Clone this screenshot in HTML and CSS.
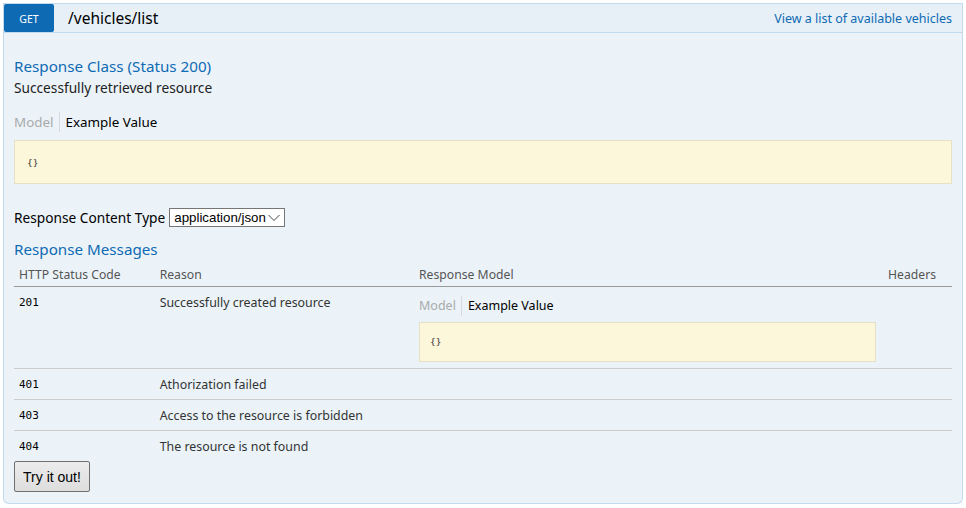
FILE: index.html
```html
<!DOCTYPE html>
<html>
<head>
<meta charset="utf-8">
<link rel="stylesheet" href="styles.css">
</head>
<body>
<div class="operation">
  <div class="heading">
    <span class="method">GET</span>
    <span class="path">/vehicles/list</span>
    <a class="summary">View a list of available vehicles</a>
  </div>
  <div class="content">
    <h4 class="h-class">Response Class (Status 200)</h4>
    <div class="desc">Successfully retrieved resource</div>
    <div class="tabs">
      <span class="tab tab-model">Model</span>
      <span class="tab tab-example">Example Value</span>
    </div>
    <div class="snippet"><code>{}</code></div>
    <div class="ctype">
      <label>Response Content Type</label>
      <span class="select">application/json
        <svg width="12" height="8" viewBox="0 0 12 8"><path d="M0.5 1 L6 6.5 L11.5 1" fill="none" stroke="#444" stroke-width="1"/></svg>
      </span>
    </div>
    <h4 class="h-msg">Response Messages</h4>
    <table class="messages">
      <thead>
        <tr><th class="c-code">HTTP Status Code</th><th class="c-reason">Reason</th><th class="c-model">Response Model</th><th class="c-head">Headers</th></tr>
      </thead>
      <tbody>
        <tr class="r-big">
          <td class="code">201</td><td>Successfully created resource</td>
          <td>
            <div class="tabs small">
              <span class="tab tab-model">Model</span>
              <span class="tab tab-example">Example Value</span>
            </div>
            <div class="snippet inner"><code>{}</code></div>
          </td>
          <td></td>
        </tr>
        <tr><td class="code">401</td><td>Athorization failed</td><td></td><td></td></tr>
        <tr><td class="code">403</td><td>Access to the resource is forbidden</td><td></td><td></td></tr>
        <tr class="last"><td class="code">404</td><td>The resource is not found</td><td></td><td></td></tr>
      </tbody>
    </table>
    <button class="try">Try it out!</button>
  </div>
</div>
</body>
</html>
```
FILE: styles.css
```css
html, body { margin: 0; padding: 0; background: #fff; }
body { padding: 3px 3px 0 3px; font-family: "Noto Sans", "Open Sans", sans-serif; font-size: 13.7px; color: #333; }
.operation { width: 960px; }
.heading {
  display: flex; align-items: center; height: 28px;
  background: #e7f0f7; border: 1px solid #c3d9ec;
}
.method {
  width: 50px; height: 28px; background: #0f6ab4; color: #fff;
  font-size: 10.5px; display: flex; align-items: center; justify-content: center;
  border-radius: 2px; padding-top: 1px; box-sizing: border-box;
}
.path { margin-left: 14px; font-size: 15.5px; color: #000; flex: 1; }
.summary { color: #0f6ab4; font-size: 12.5px; margin-right: 10px; }
.content {
  background: #ebf3f9; border: 1px solid #c3d9ec; border-top: none;
  border-radius: 0 0 6px 6px; padding: 10px 10px 11px 10px;
}
h4 { margin: 0; font-weight: normal; color: #0f6ab4; font-size: 15.2px; }
.h-class { margin-top: 12px; line-height: 22px; }
.desc { line-height: 22px; margin-top: 0; color: #222; }
.tabs { display: flex; margin-top: 13px; line-height: 20px; font-size: 13.4px; }
.tab-model { color: #aaa; padding-right: 5px; border-right: 1px solid #d8d8d8; }
.tab-example { color: #000; padding-left: 6px; }
.snippet {
  margin-top: 8px; background: #fcf6db; border: 1px solid #e5e0c6;
  height: 42px; display: flex; align-items: center; padding-left: 12px;
}
code { font-family: "DejaVu Sans Mono", monospace; font-size: 9.5px; color: #333; }
.ctype { margin-top: 24px; display: flex; align-items: center; color: #000; }
.ctype label { margin-right: 4px; }
.select {
  display: inline-flex; align-items: center; justify-content: space-between;
  width: 116px; height: 19px; box-sizing: border-box; border: 1px solid #767676;
  background: #fff; font-family: "Liberation Sans", Arial, sans-serif; font-size: 13.3px;
  padding: 0 4px; color: #000;
}
.h-msg { margin-top: 11px; line-height: 22px; }
.messages { width: 938px; border-collapse: collapse; margin-top: 0; }
.messages th {
  text-align: left; font-weight: normal; color: #555; padding: 6px 5px 2px 5px;
  border-bottom: 1px solid #999; line-height: 18px; font-size: 12.2px;
}
.c-code { width: 131px; }
.c-reason { width: 250px; }
.c-model { width: 459px; }
.c-head { text-align: right !important; padding-right: 16px !important; }
.messages td {
  vertical-align: top; padding: 7px 5px 5px 5px; border-bottom: 1px solid #ccc;
  line-height: 18px; color: #333; font-size: 12.4px;
}
.messages tr.last td { border-bottom: none; padding-bottom: 5px; }
.messages td.code { font-family: "DejaVu Sans Mono", monospace; font-size: 11px; color: #000; }
.tabs.small { margin-top: 2px; line-height: 20px; font-size: 12.5px; }
.snippet.inner { margin-top: 6px; height: 38px; width: 445px; padding-left: 10px; }
.r-big td { padding-bottom: 6px; }
.try {
  display: block; margin-top: 0; width: 76px; height: 31px;
  font-family: "Liberation Sans", Arial, sans-serif; font-size: 14px; color: #000;
  border: 1px solid #707070; border-radius: 2px;
  background: linear-gradient(#ececec, #dddddd);
}
```
